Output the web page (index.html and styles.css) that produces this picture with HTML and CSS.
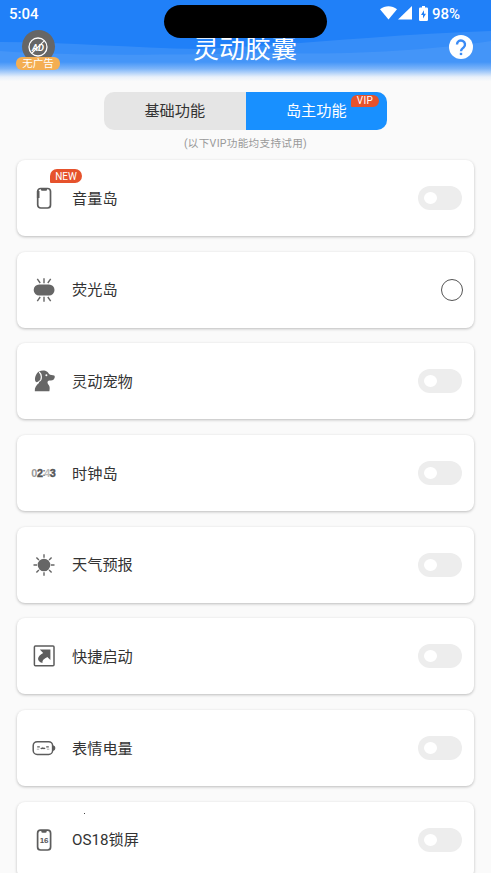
FILE: index.html
```html
<!DOCTYPE html>
<html lang="zh-CN">
<head>
<meta charset="utf-8">
<meta name="viewport" content="width=device-width, initial-scale=1">
<title>灵动胶囊</title>
<link rel="stylesheet" href="styles.css">
</head>
<body>
<header class="header">
  <svg class="waves" viewBox="0 0 491 84" preserveAspectRatio="none" aria-hidden="true">
    <path d="M0 42C70 42 130 48 200 49C300 45 390 34 491 31V84H0Z" fill="#fff" fill-opacity=".1"/>
    <path d="M0 51C80 57 190 54 270 53C360 55 430 50 491 41V84H0Z" fill="#fff" fill-opacity=".07"/>
  </svg>
  <div class="status">
    <span class="time">5:04</span>
    <div class="status-icons">
      <svg width="17" height="14" viewBox="0 0 17 14"><path d="M0 3.2C5 -.9 12 -.9 17 3.2L8.5 13.5Z" fill="#fff"/></svg>
      <svg class="signal" width="14" height="14" viewBox="0 0 14 14"><path d="M14 0V13.5H0Z" fill="#fff"/></svg>
      <svg class="battery" width="9" height="15" viewBox="0 0 9 15"><path d="M3 0h3v1.5h1.8q1.2 0 1.2 1.2v11.1q0 1.2-1.2 1.2H1.2Q0 15 0 13.8V2.7Q0 1.5 1.2 1.5H3Z" fill="#fff"/><path d="M5 4.2 2 9h2v3.5l3-4.8H5Z" fill="#2080f6"/></svg>
      <span class="percent">98%</span>
    </div>
  </div>
  <div class="titlebar">
    <div class="noad">
      <div class="noad-disc">
        <svg width="20" height="20" viewBox="0 0 20 20"><circle cx="10" cy="10" r="9" fill="none" stroke="#fff" stroke-width="1.3"/><text x="10" y="13.6" text-anchor="middle" class="ad-text">AD</text><path d="M16.2 3.8 4 16" stroke="#fff" stroke-width="1.1"/></svg>
      </div>
      <span class="noad-label">无广告</span>
    </div>
    <h1 class="title">灵动胶囊</h1>
    <svg class="help" width="24" height="24" viewBox="0 0 24 24"><circle cx="12" cy="12" r="12" fill="#fff"/><path d="M8 9.5a4 4 0 1 1 6.7 2.9C13.2 13.6 12 14.2 12 16.2" fill="none" stroke="#3b8bf5" stroke-width="2.4"/><path d="M10.8 17.8h2.4v2.3h-2.4z" fill="#3b8bf5"/></svg>
  </div>
  <div class="island"></div>
</header>
<main class="main">
  <nav class="tabs">
    <div class="tab">基础功能</div>
    <div class="tab active">岛主功能<span class="vip">VIP</span></div>
  </nav>
  <p class="hint">(以下VIP功能均支持试用)</p>
  <section class="list">
    <div class="card">
      <svg class="icon" viewBox="0 0 26 26"><rect x="6.7" y="3.5" width="12.8" height="19.5" rx="3" fill="none" stroke="#5c5c5c" stroke-width="1.7"/><path d="M10 3.5h6v1.2q0 1-1 1h-4q-1 0-1-1Z" fill="#5c5c5c"/><path d="M7.2 6v7" stroke="#5c5c5c" stroke-width="2.6"/></svg>
      <span class="label">音量岛</span><span class="switch"></span>
      <span class="new">NEW</span>
    </div>
    <div class="card">
      <svg class="icon" viewBox="0 0 26 26"><rect x="2.7" y="7.5" width="20.8" height="11" rx="5.5" fill="#666"/><path d="M13 1.3v5M6.3 1.8l2.9 4.2M19.7 1.8l-2.9 4.2M13 19.7v5M6.3 24.2l2.9-4.2M19.7 24.2l-2.9-4.2" stroke="#666" stroke-width="1.4"/></svg>
      <span class="label">荧光岛</span><span class="radio"></span>
    </div>
    <div class="card">
      <svg class="icon" viewBox="0 0 26 26"><path d="M8 3.6C10.3 2.2 14 2 16.2 3.8C17.5 4.6 17.8 6.4 19.2 6.8L23.2 7.5C24.4 8.2 23.6 10.6 22.7 11.5C21.2 12.8 18.5 12.1 17 13.1C16 14.2 16.6 15.9 17.7 17.1C19 18.5 18.8 20.7 18.4 23.2H3.8C3.5 19.4 5.5 17 8 15V13C6.3 14.7 4.7 14.4 4.2 12.8C3.4 10 5 5.2 8 3.6Z" fill="#666"/><path d="M8.2 4C10.8 6.2 11.4 11.6 8.1 13.6" fill="none" stroke="#fff" stroke-width="1.2"/><circle cx="15.4" cy="7.3" r="1" fill="#fff"/></svg>
      <span class="label">灵动宠物</span><span class="switch"></span>
    </div>
    <div class="card">
      <svg class="icon" viewBox="0 0 26 26"><g class="clock"><text x=".3" y="17" fill="#999">0</text><text x="6" y="17" fill="#555" stroke="#555" stroke-width=".4">2</text><text x="11.3" y="16.4" fill="#777">:</text><text x="13.3" y="17" fill="#bbb">4</text><text x="18.8" y="17" fill="#555" stroke="#555" stroke-width=".4">3</text></g></svg>
      <span class="label">时钟岛</span><span class="switch"></span>
    </div>
    <div class="card">
      <svg class="icon" viewBox="0 0 26 26"><circle cx="13" cy="13" r="6.3" fill="#666"/><path d="M13 2.2v3.6M13 20.2v3.6M2.5 13h3.6M19.9 13h3.6M5.4 5.4l2.5 2.5M18.1 18.1l2.5 2.5M20.6 5.4l-2.5 2.5M7.9 18.1l-2.5 2.5" stroke="#666" stroke-width="1.4"/></svg>
      <span class="label">天气预报</span><span class="switch"></span>
    </div>
    <div class="card">
      <svg class="icon" viewBox="0 0 26 26"><rect x="3.4" y="3.1" width="19.6" height="19.6" rx="1" fill="none" stroke="#5c5c5c" stroke-width="1.5"/><path d="M8.8 6.6h10.6v10.4l-3.1-3.1C13.3 15.6 11 17 11.5 20.1C4.8 18 6.3 12.7 12.2 9.9Z" fill="#5c5c5c"/></svg>
      <span class="label">快捷启动</span><span class="switch"></span>
    </div>
    <div class="card">
      <svg class="icon" viewBox="0 0 26 26"><rect x="2.2" y="6.7" width="19.4" height="12.8" rx="4" fill="none" stroke="#5c5c5c" stroke-width="1.5"/><path d="M22 10.2q2.4.3 2.4 2.9t-2.4 2.9Z" fill="#5c5c5c"/><path d="M6.2 11.8h2.6M15.2 11.8h2.6M9.8 12.8q1 1.6 2.1 0q1.1 1.6 2.1 0" fill="none" stroke="#5c5c5c" stroke-width="1.3"/><path d="M5.8 14.2h2.4M15.9 14.2h2.4" stroke="#aaa"/></svg>
      <span class="label">表情电量</span><span class="switch"></span>
    </div>
    <div class="card">
      <svg class="icon" viewBox="0 0 26 26"><rect x="6.6" y="3.2" width="13" height="19.8" rx="3" fill="none" stroke="#5c5c5c" stroke-width="1.7"/><path d="M10.3 3h5.4v1.4q0 1.4-1.4 1.4h-2.6q-1.4 0-1.4-1.4Z" fill="#5c5c5c"/><text x="13.1" y="16" text-anchor="middle" class="sixteen">16</text></svg>
      <span class="label">OS18锁屏</span><span class="switch"></span>
      <span class="speck"></span>
    </div>
  </section>
</main>
</body>
</html>
```
FILE: styles.css
```css
* { box-sizing: border-box; }
body {
  margin: 0;
  height: 873px;
  overflow: hidden;
  background: #fafafa;
  color: #333;
  font-family: Roboto, "Noto Sans CJK SC", sans-serif;
}
svg { display: block; flex: none; }
.header {
  position: relative;
  height: 84px;
  color: #fff;
  background: #2080f8;
}
.waves { position: absolute; inset: 0; width: 100%; height: 100%; }
.header::before {
  content: "";
  position: absolute;
  inset: 62px 0 0;
  z-index: 1;
  background: linear-gradient(rgba(250,250,250,0), rgba(250,250,250,.3) 30%, rgba(250,250,250,.9) 68%, #fafafa 88%);
}
.status {
  position: relative;
  display: flex;
  justify-content: space-between;
  align-items: center;
  height: 28px;
  padding: 0 31px 0 9px;
}
.time { font-size: 15px; font-weight: 500; }
.status-icons { display: flex; align-items: center; margin-top: -2px; }
.signal { margin-left: 1px; }
.battery { margin: 0 4px 0 7px; }
.percent { font-size: 15px; font-weight: 500; padding-top: 2px; }
.titlebar {
  position: relative;
  z-index: 2;
  display: grid;
  grid-template-columns: 44px 1fr 44px;
  padding: 0 18px 0 16px;
  height: 44px;
}
.noad { display: flex; flex-direction: column; align-items: center; padding-top: 2px; }
.noad-disc {
  display: grid;
  place-items: center;
  width: 33px;
  height: 33px;
  flex: none;
  border-radius: 50%;
  background: #666;
}
.ad-text { font: italic bold 9.5px Roboto, sans-serif; fill: #fff; }
.noad-label {
  width: 44px;
  height: 13px;
  margin-top: -6px;
  border-radius: 6px;
  background: #f4ae52;
  font-size: 10.5px;
  line-height: 13px;
  text-align: center;
}
.title {
  margin: 0;
  font-size: 26px;
  font-weight: 400;
  line-height: 38px;
  text-align: center;
  padding: 2px 0 0 1px;
}
.help { justify-self: end; margin: 7px 0 0; }
.island {
  position: absolute;
  z-index: 3;
  left: 164px;
  top: 5px;
  width: 163px;
  height: 33px;
  border-radius: 17px;
  background: #000;
}
.main { padding: 8px 17px 0; }
.tabs {
  display: grid;
  grid-template-columns: 1fr 1fr;
  width: 283px;
  height: 38px;
  margin: 0 auto;
  border-radius: 10px;
  overflow: hidden;
  background: #e5e5e5;
}
.tab {
  position: relative;
  text-align: center;
  font-size: 15.2px;
  line-height: 39px;
}
.active { background: #1890ff; color: #fff; }
.vip {
  position: absolute;
  top: 3px;
  right: 8px;
  width: 28px;
  height: 12px;
  border-radius: 6px 6px 6px 1px;
  background: #e6522c;
  font-size: 10px;
  line-height: 12px;
  letter-spacing: .3px;
}
.hint {
  margin: 5px 0 7px;
  height: 18px;
  font-size: 10.6px;
  line-height: 18px;
  letter-spacing: .3px;
  text-align: center;
  color: #999;
}
.list { display: flex; flex-direction: column; gap: 15.7px; }
.card {
  position: relative;
  display: flex;
  align-items: center;
  flex: none;
  height: 76px;
  padding: 0 11px 0 14px;
  border-radius: 8px;
  background: #fff;
  box-shadow: 0 1px 3px rgba(0,0,0,.25);
}
.icon { width: 26px; height: 26px; }
.label { flex: 1; margin-left: 15px; padding-top: 1px; font-size: 15.2px; line-height: 22px; }
.switch {
  width: 44px;
  height: 24px;
  margin-right: 1px;
  padding: 6px;
  border-radius: 12px;
  background: #ededed;
}
.switch::before {
  content: "";
  display: block;
  width: 13px;
  height: 12px;
  border-radius: 50%;
  background: #fff;
}
.radio { width: 22px; height: 22px; border: 1px solid #555; border-radius: 50%; }
.new {
  position: absolute;
  left: 33px;
  top: 9px;
  width: 32px;
  height: 14px;
  border-radius: 7px 7px 7px 1px;
  background: #e6522c;
  color: #fff;
  font-size: 10px;
  line-height: 15px;
  text-align: center;
}
.clock { font: bold 10.8px "Liberation Sans", sans-serif; }
.sixteen { font: bold 8px "Liberation Sans", sans-serif; fill: #555; }
.speck { position: absolute; left: 67px; top: 11px; width: 1px; height: 1px; background: #444; }
```
